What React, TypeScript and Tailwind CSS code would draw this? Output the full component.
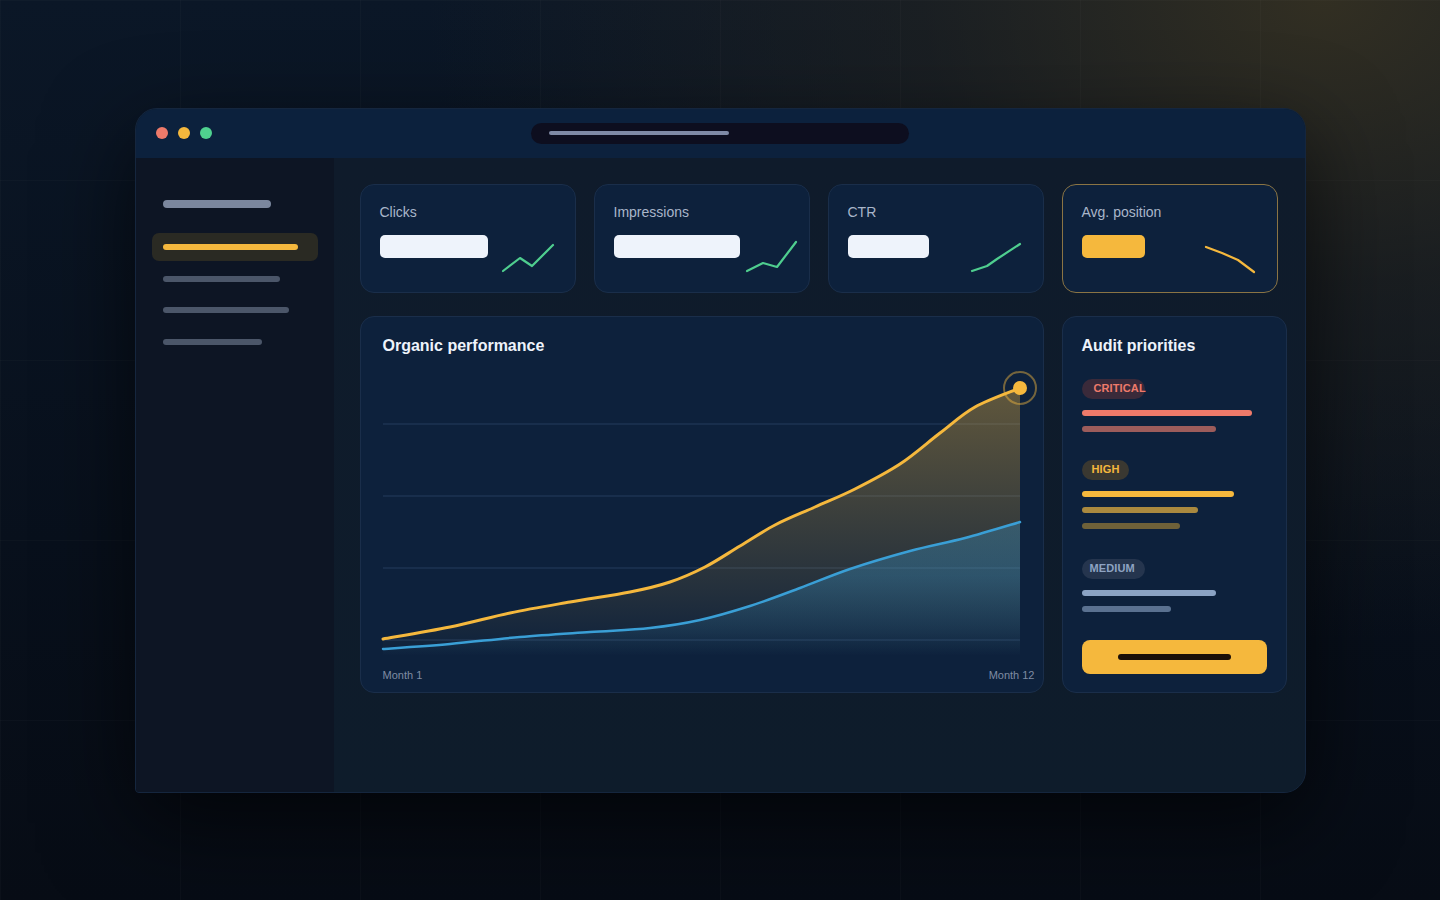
import React from "react";

type P = [number, number];

function smooth(pts: P[]): string {
  let d = `M${pts[0][0]},${pts[0][1]}`;
  for (let i = 0; i < pts.length - 1; i++) {
    const p0 = pts[i - 1] || pts[i];
    const p1 = pts[i];
    const p2 = pts[i + 1];
    const p3 = pts[i + 2] || p2;
    const c1x = p1[0] + (p2[0] - p0[0]) / 6;
    const c1y = p1[1] + (p2[1] - p0[1]) / 6;
    const c2x = p2[0] - (p3[0] - p1[0]) / 6;
    const c2y = p2[1] - (p3[1] - p1[1]) / 6;
    d += ` C${c1x.toFixed(1)},${c1y.toFixed(1)} ${c2x.toFixed(1)},${c2y.toFixed(1)} ${p2[0]},${p2[1]}`;
  }
  return d;
}

const OX = 383;
const OY = 370;
const toSvg = (pts: P[]): P[] => pts.map(([x, y]) => [x - OX, y - OY]);

const yellowPts = toSvg([
  [383, 638],
  [450, 626],
  [510, 612],
  [570, 601],
  [630, 591],
  [670, 581],
  [705, 566],
  [740, 545],
  [775, 524],
  [815, 506],
  [855, 488],
  [900, 463],
  [940, 432],
  [975, 406],
  [1020, 387],
]);

const bluePts = toSvg([
  [383, 648],
  [450, 643],
  [520, 636],
  [590, 631],
  [650, 627],
  [700, 619],
  [750, 605],
  [800, 587],
  [850, 568],
  [910, 550],
  [965, 537],
  [1020, 521],
]);

function Chart() {
  const yLine = smooth(yellowPts);
  const bLine = smooth(bluePts);
  const last = yellowPts[yellowPts.length - 1];
  const bottom = 285;
  const yArea = `${yLine} L${last[0]},${bottom} L0,${bottom} Z`;
  const bl = bluePts[bluePts.length - 1];
  const bArea = `${bLine} L${bl[0]},${bottom} L0,${bottom} Z`;
  return (
    <svg width={637} height={290} viewBox="0 0 637 290" className="block overflow-visible">
      <defs>
        <linearGradient id="ga" x1="0" y1="0" x2="0" y2="1">
          <stop offset="0" stopColor="#f5b83d" stopOpacity="0.36" />
          <stop offset="0.75" stopColor="#f5b83d" stopOpacity="0.1" />
          <stop offset="1" stopColor="#f5b83d" stopOpacity="0" />
        </linearGradient>
        <linearGradient id="gb" x1="0" y1="0" x2="0" y2="1">
          <stop offset="0.4" stopColor="#3aa0d8" stopOpacity="0.3" />
          <stop offset="0.8" stopColor="#3aa0d8" stopOpacity="0.12" />
          <stop offset="1" stopColor="#3aa0d8" stopOpacity="0" />
        </linearGradient>
      </defs>
      {[53, 125, 197, 269].map((y) => (
        <line key={y} x1={0} x2={637} y1={y} y2={y} stroke="#1c3352" strokeWidth={1.5} />
      ))}
      <path d={yArea} fill="url(#ga)" />
      <path d={bArea} fill="url(#gb)" />
      <path d={bLine} fill="none" stroke="#3a9fd6" strokeWidth={2.5} strokeLinecap="round" />
      <path d={yLine} fill="none" stroke="#f5b83d" strokeWidth={3} strokeLinecap="round" />
      <circle cx={last[0]} cy={last[1]} r={16} fill="none" stroke="#f5b83d" strokeOpacity={0.45} strokeWidth={2} />
      <circle cx={last[0]} cy={last[1]} r={7} fill="#f5b83d" />
    </svg>
  );
}

type Kpi = {
  label: string;
  barW: number;
  barColor: string;
  spark: P[];
  sparkColor: string;
  highlight?: boolean;
};

const kpis: Kpi[] = [
  { label: "Clicks", barW: 108, barColor: "#eef3fb", spark: [[143, 87], [160, 74], [172, 82], [193, 61]], sparkColor: "#4fce8f" },
  { label: "Impressions", barW: 126, barColor: "#eef3fb", spark: [[153, 87], [169, 79], [183, 83], [202, 58]], sparkColor: "#4fce8f" },
  { label: "CTR", barW: 81, barColor: "#eef3fb", spark: [[144, 87], [159, 82], [169, 75], [192, 60]], sparkColor: "#4fce8f" },
  { label: "Avg. position", barW: 63, barColor: "#f5b83d", spark: [[144, 63], [160, 69], [176, 76], [192, 88]], sparkColor: "#f5b83d", highlight: true },
];

function KpiCard({ k }: { k: Kpi }) {
  const pts = k.spark.map(([x, y]) => `${x - 136},${y - 45}`).join(" ");
  return (
    <div
      className={`flex h-[109px] w-[216px] rounded-[14px] border bg-[#0d213c] pl-[19px] pr-[10px] pt-[17px] pb-[14px] ${
        k.highlight ? "border-[#8a7444]" : "border-[#1a2e4a]"
      }`}
    >
      <div className="flex min-w-0 flex-1 flex-col">
        <div className="text-[14px] leading-5 text-[#a9b6ca]">{k.label}</div>
        <div className="mt-[13px] h-[23px] shrink-0 rounded-[5px]" style={{ width: k.barW, backgroundColor: k.barColor }} />
      </div>
      <svg width={70} height={50} viewBox="0 0 70 50" className="mb-[-1px] mr-[-1px] shrink-0 self-end overflow-visible">
        <polyline points={pts} fill="none" stroke={k.sparkColor} strokeWidth={2.2} strokeLinejoin="round" strokeLinecap="round" />
      </svg>
    </div>
  );
}

function Badge({ text, w, pl, bg, color }: { text: string; w: number; pl: number; bg: string; color: string }) {
  return (
    <div
      className="flex h-5 items-center whitespace-nowrap rounded-full text-[11px] font-bold leading-none tracking-[0.01em]"
      style={{ width: w, paddingLeft: pl, backgroundColor: bg, color }}
    >
      {text}
    </div>
  );
}

function Bar({ w, color, mt }: { w: number; color: string; mt: number }) {
  return <div className="h-[6px] rounded-full" style={{ width: w, backgroundColor: color, marginTop: mt }} />;
}

export default function App() {
  return (
    <div
      className="min-h-screen w-full bg-[#080f1b] bg-[radial-gradient(ellipse_1150px_820px_at_92%_0%,rgba(52,48,34,0.95),rgba(36,36,32,0.6)_35%,rgba(8,15,27,0)_78%),linear-gradient(180deg,#0b1727_0%,#08101c_60%,#070c15_100%)]"
      style={{ fontFamily: '"Liberation Sans", Arial, sans-serif' }}
    >
      <div className="flex h-screen w-full items-center justify-center bg-[linear-gradient(rgba(255,255,255,0.018)_1px,transparent_1px),linear-gradient(90deg,rgba(255,255,255,0.018)_1px,transparent_1px)] bg-size-[180px_180px] bg-[length:180px_180px]">
        <div className="flex h-[685px] w-[1171px] flex-col overflow-hidden rounded-[22px] rounded-bl-[4px] border border-[#15263e] bg-[#0e1c2b] shadow-[0_30px_90px_rgba(0,0,0,0.65)]">
          {/* Title bar */}
          <div className="flex h-[49px] shrink-0 items-center bg-[#0c213d] px-[20px]">
            <div className="flex items-center gap-[10px]">
              <span className="h-3 w-3 rounded-full bg-[#ee7a6a]" />
              <span className="h-3 w-3 rounded-full bg-[#f5b83d]" />
              <span className="h-3 w-3 rounded-full bg-[#4fd18f]" />
            </div>
            <div className="ml-[319px] flex h-[21px] w-[378px] items-center rounded-full bg-[#0d0e1f] px-[18px]">
              <div className="h-[4px] w-[180px] rounded-full bg-[#7f8aa6]" />
            </div>
          </div>
          {/* Body */}
          <div className="flex min-h-0 flex-1">
            <div className="flex w-[198px] shrink-0 flex-col bg-[#0d1524] px-[16px] pt-[42px]">
              <div className="ml-[11px] h-[8px] w-[108px] rounded-full bg-[#7b879e]" />
              <div className="mt-[25px] flex h-[28px] items-center rounded-[7px] bg-[#2a2a23] px-[11px]">
                <div className="h-[6px] w-[135px] rounded-full bg-[#f5b83d]" />
              </div>
              <div className="ml-[11px] mt-[15px] h-[6px] w-[117px] rounded-full bg-[#4b5669]" />
              <div className="ml-[11px] mt-[25px] h-[6px] w-[126px] rounded-full bg-[#4b5669]" />
              <div className="ml-[11px] mt-[26px] h-[6px] w-[99px] rounded-full bg-[#4b5669]" />
            </div>
            <div className="flex flex-1 flex-col bg-[linear-gradient(180deg,#0f1b2b,#0e1c2b)] pl-[26px] pt-[26px]">
              <div className="flex gap-[18px]">
                {kpis.map((k) => (
                  <KpiCard key={k.label} k={k} />
                ))}
              </div>
              <div className="mt-[23px] flex gap-[18px]">
                {/* Chart card */}
                <div className="flex h-[377px] w-[684px] flex-col rounded-[14px] border border-[#1a2e4a] bg-[#0d213c] pl-[22px] pr-[8px] pt-[18px]">
                  <div className="text-[16px] font-bold leading-[22px] text-[#eef3fb]">Organic performance</div>
                  <div className="mt-[14px]">
                    <Chart />
                  </div>
                  <div className="mt-[6px] flex justify-between text-[11px] leading-4 text-[#7f8ca3]">
                    <span>Month 1</span>
                    <span>Month 12</span>
                  </div>
                </div>
                {/* Audit card */}
                <div className="flex h-[377px] w-[225px] flex-col rounded-[14px] border border-[#1a2e4a] bg-[#0d213c] pl-[19px] pt-[18px]">
                  <div className="text-[16px] font-bold leading-[22px] text-[#eef3fb]">Audit priorities</div>
                  <div className="mt-[22px]">
                    <Badge text="CRITICAL" w={63} pl={12} bg="#3a2a3a" color="#ee7a6a" />
                  </div>
                  <Bar w={170} color="#ee7a6a" mt={11} />
                  <Bar w={134} color="#9c5c5b" mt={10} />
                  <div className="mt-[28px]">
                    <Badge text="HIGH" w={47} pl={10} bg="#3a3831" color="#f5b83d" />
                  </div>
                  <Bar w={152} color="#f5b83d" mt={11} />
                  <Bar w={116} color="#a9893f" mt={10} />
                  <Bar w={98} color="#6e6139" mt={10} />
                  <div className="mt-[30px]">
                    <Badge text="MEDIUM" w={63} pl={8} bg="#25354e" color="#8ea3c2" />
                  </div>
                  <Bar w={134} color="#8ba3c4" mt={11} />
                  <Bar w={89} color="#5a7190" mt={10} />
                  <div className="mt-[28px] flex h-[34px] w-[185px] items-center justify-center rounded-[8px] bg-[#f5b83d]">
                    <div className="h-[6px] w-[113px] rounded-full bg-[#1b0f08]" />
                  </div>
                </div>
              </div>
            </div>
          </div>
        </div>
      </div>
    </div>
  );
}
